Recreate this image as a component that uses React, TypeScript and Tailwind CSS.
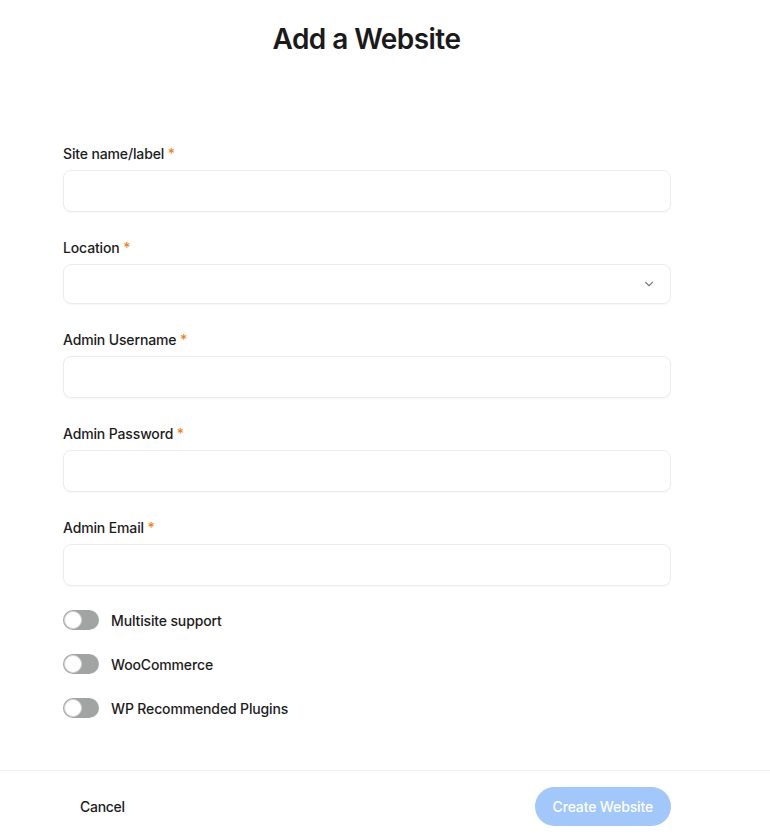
import * as React from "react";
import { ChevronDown } from "lucide-react";

const FIELDS = [
  { label: "Site name/label", kind: "text" },
  { label: "Location", kind: "select" },
  { label: "Admin Username", kind: "text" },
  { label: "Admin Password", kind: "password" },
  { label: "Admin Email", kind: "email" },
];

const TOGGLES = ["Multisite support", "WooCommerce", "WP Recommended Plugins"];

function Toggle({ label }: { label: string }) {
  const [on, setOn] = React.useState(false);
  return (
    <label className="flex items-center gap-3 h-5 cursor-pointer">
      <button
        type="button"
        onClick={() => setOn((v) => !v)}
        className={
          on
            ? "relative w-9 h-5 rounded-full bg-blue-500 transition-colors"
            : "relative w-9 h-5 rounded-full bg-[#a0a5a4] transition-colors"
        }
      >
        <span
          className={
            on
              ? "absolute top-[1px] left-[17px] w-[18px] h-[18px] rounded-full bg-white border border-[#d4d6d6]"
              : "absolute top-[1px] left-[1px] w-[18px] h-[18px] rounded-full bg-white border border-[#d4d6d6]"
          }
        />
      </button>
      <span className="text-[14px] font-medium text-[#1c1c1c] tracking-[-0.01em]">{label}</span>
    </label>
  );
}

export default function App() {
  return (
    <div className="min-h-[838px] bg-white font-['Inter','Liberation_Sans',sans-serif] flex flex-col">
      <div className="w-[733px]">
        <h1 className="text-center text-[28px] font-semibold text-[#1a1a1a] tracking-[-0.02em] pt-[19px] leading-[40px]">
          Add a Website
        </h1>

        <div className="ml-[63px] w-[608px] mt-[85px] flex flex-col">
          {FIELDS.map((f) => (
            <div key={f.label} className="flex flex-col mb-[26px]">
              <div className="text-[14px] font-medium text-[#1c1c1c] tracking-[-0.01em] leading-[20px] mb-[6px]">
                {f.label} <span className="text-[#f7821b]">*</span>
              </div>
              {f.kind === "select" ? (
                <div className="h-[40px] rounded-lg border border-[#ececec] shadow-[0_1px_2px_rgba(0,0,0,0.04)] flex items-center justify-end pr-[14px]">
                  <ChevronDown size={14} className="text-[#7a8089]" strokeWidth={2} />
                </div>
              ) : (
                <input
                  type={f.kind}
                  className="h-[42px] rounded-lg border border-[#ececec] shadow-[0_1px_2px_rgba(0,0,0,0.04)] px-3 outline-none"
                />
              )}
            </div>
          ))}

          <div className="flex flex-col gap-[24px] -mt-[2px]">
            {TOGGLES.map((t) => (
              <Toggle key={t} label={t} />
            ))}
          </div>
        </div>
      </div>

      <div className="mt-[52px] border-t border-[#efefef] flex items-center justify-between h-[71px] pl-[80px] pr-[99px]">
        <button type="button" className="text-[14px] font-medium text-[#1c1c1c] tracking-[-0.02em]">
          Cancel
        </button>
        <button
          type="button"
          className="h-[39px] px-[18px] rounded-full bg-[#a2c7fb] text-white text-[14px] font-medium tracking-[-0.01em]"
        >
          Create Website
        </button>
      </div>
    </div>
  );
}
